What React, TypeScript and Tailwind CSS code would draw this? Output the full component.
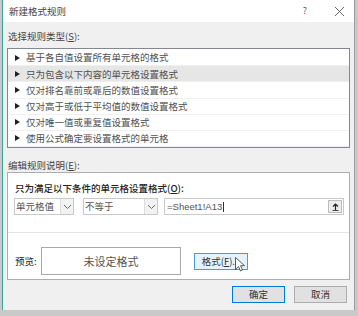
import React from 'react';

const rules = [
  '基于各自值设置所有单元格的格式',
  '只为包含以下内容的单元格设置格式',
  '仅对排名靠前或靠后的数值设置格式',
  '仅对高于或低于平均值的数值设置格式',
  '仅对唯一值或重复值设置格式',
  '使用公式确定要设置格式的单元格',
];

const Chevron = () => (
  <svg width="9" height="6" viewBox="0 0 9 6" fill="none">
    <path d="M1 1l3.5 3.5L8 1" stroke="#6b6b6b" strokeWidth="1" />
  </svg>
);

const Select: React.FC<{ label: string; width: string }> = ({ label, width }) => (
  <div className={`flex h-[17px] ${width} items-stretch border border-[#c9c9c9] bg-white`}>
    <span className="flex-1 pl-[1px] leading-[15px] text-[#555]">{label}</span>
    <span className="flex w-[13px] items-center justify-center border-l border-[#dcdcdc] bg-[#f2f2f2]">
      <Chevron />
    </span>
  </div>
);

export default function App() {
  return (
    <div
      className="relative h-[316px] w-[358px] overflow-hidden bg-[#c9c9c9] text-[9.5px] text-[#3a3a3a]"
      style={{ fontFamily: '"Noto Sans CJK SC", "Noto Sans", sans-serif' }}
    >
      <div className="ml-[2px] flex h-[310px] w-[353px] flex-col border-l border-r border-[#3aa39a] border-r-[#9a9a9a] bg-[#f0f0f0]">
        {/* title */}
        <div className="flex h-[22px] items-center bg-white pl-[6px] pr-[9px]">
          <span className="flex-1 text-[9.5px] text-[#444]">新建格式规则</span>
          <span className="mr-[27px] text-[9px] text-[#555]">?</span>
          <svg width="11" height="11" viewBox="0 0 11 11">
            <path d="M1 1l9 9M10 1l-9 9" stroke="#555" strokeWidth="0.9" />
          </svg>
        </div>

        <div className="flex flex-col px-[4px]">
          <div className="mt-[6px] h-[16px] pl-[1px] leading-[16px] text-[#444]">
            选择规则类型(<span className="underline">S</span>):
          </div>

          <div className="mt-[4px] flex h-[100px] flex-col border border-[#828790] bg-white pt-[1px]">
            {rules.map((r, i) => (
              <div
                key={r}
                className={`flex h-[16.3px] items-center border-b border-[#f0f0f0] pl-[7px] ${
                  i === 1 ? 'bg-[#e6e6e6]' : ''
                }`}
              >
                <svg className="mr-[6px]" width="5" height="6" viewBox="0 0 5 6">
                  <path d="M0 0l5 3-5 3z" fill="#222" />
                </svg>
                <span className="text-[#505050]">{r}</span>
              </div>
            ))}
          </div>

          <div className="mt-[10px] h-[14px] pl-[1px] leading-[14px] text-[#444]">
            编辑规则说明(<span className="underline">E</span>):
          </div>

          <div className="flex h-[108px] flex-col border border-[#adadad] bg-white">
            <div className="mt-[9px] h-[12px] pl-[7px] leading-[12px] font-medium text-[#222]">
              只为满足以下条件的单元格设置格式(<span className="underline">O</span>):
            </div>
            <div className="mt-[4px] flex pl-[6px] pr-[5px]">
              <Select label="单元格值" width="w-[60px]" />
              <div className="w-[9px]" />
              <Select label="不等于" width="w-[75px]" />
              <div className="w-[6px]" />
              <div className="flex h-[17px] flex-1 items-stretch border border-[#c9c9c9] bg-white">
                <span className="flex-1 pl-[2px] leading-[15px] text-[#555]" style={{ fontFamily: '"Liberation Sans", sans-serif' }}>
                  =Sheet1!A13<span className="ml-[1px] inline-block h-[10px] w-px bg-[#333] align-middle" />
                </span>
                <span className="my-[1px] mr-[1px] flex w-[14px] items-center justify-center border border-[#bdbdbd] bg-[#ededed]">
                  <svg width="7" height="8" viewBox="0 0 7 8">
                    <path d="M3.5 1v6M1 3.5l2.5-2.5 2.5 2.5" stroke="#222" strokeWidth="1.2" fill="none" />
                    <path d="M0.5 7.5h6" stroke="#222" strokeWidth="0.8" />
                  </svg>
                </span>
              </div>
            </div>
            <div className="mt-[17px] h-px bg-[#e3e3e3]" />
            <div className="mt-[14px] flex items-center pl-[7px]">
              <span className="w-[26px] text-[#222]">预览:</span>
              <div className="flex h-[28px] w-[140px] items-center justify-center border border-[#a9a9a9] bg-white text-[11px] text-[#555]">
                未设定格式
              </div>
              <div className="relative ml-[13px] flex h-[17px] w-[54px] items-center justify-center border border-[#4a9ae0] bg-[#e5f1fb] text-[#333]">
                格式(<span className="underline">F</span>)...
                <svg className="absolute left-[40px] top-[3px]" width="10" height="16" viewBox="0 0 10 16">
                  <path d="M0.5 0.5v12l3-3 2 4.5 2-1-2-4.3h4z" fill="white" stroke="#333" strokeWidth="0.8" />
                </svg>
              </div>
            </div>
          </div>

          <div className="mt-[6px] flex justify-end gap-[9px] pr-[3px]">
            <div className="flex h-[17px] w-[53px] items-center justify-center border border-[#0078d7] bg-[#e1e1e1] text-[#333]">
              确定
            </div>
            <div className="flex h-[17px] w-[53px] items-center justify-center border border-[#adadad] bg-[#e1e1e1] text-[#333]">
              取消
            </div>
          </div>
        </div>
      </div>
    </div>
  );
}
